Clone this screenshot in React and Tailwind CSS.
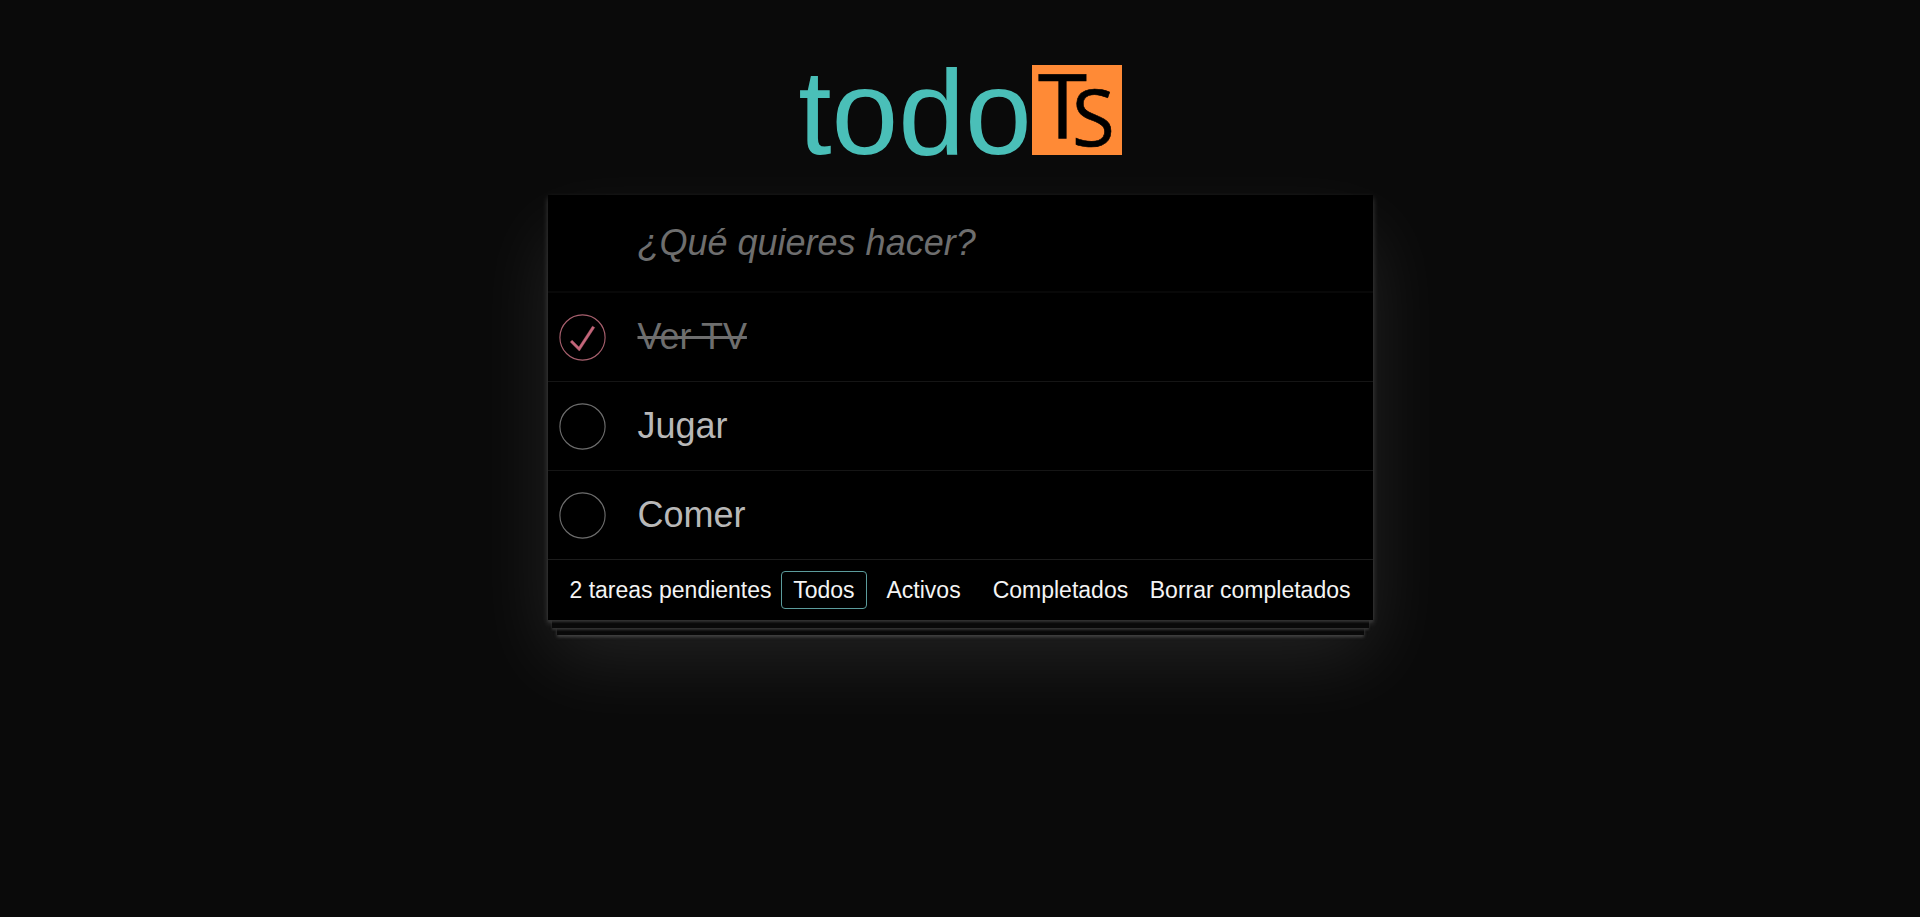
import { useState } from 'react'

const initialTodos = [
  { id: 1, title: 'Ver TV', completed: true },
  { id: 2, title: 'Jugar', completed: false },
  { id: 3, title: 'Comer', completed: false },
]

const filters = [
  { id: 'all', label: 'Todos', test: () => true },
  { id: 'active', label: 'Activos', test: (todo) => !todo.completed },
  { id: 'completed', label: 'Completados', test: (todo) => todo.completed },
]

function Logo() {
  return (
    <svg viewBox="0 0 90 90" className="size-[90px] overflow-visible" role="img" aria-label="TypeScript">
      <rect width="90" height="90" fill="#ff8a36" />
      <g fill="#000" stroke="#000" strokeWidth="0.6" fontFamily="'Open Sans', sans-serif">
        <text x="6" y="74" fontSize="89">T</text>
        <text x="40" y="81" fontSize="78">S</text>
      </g>
    </svg>
  )
}

function CheckCircle({ checked }) {
  return (
    <svg viewBox="-2 -2 104 104" className="size-[47px]" fill="none" aria-hidden="true">
      <circle cx="50" cy="50" r="50" stroke={checked ? '#a8606e' : '#6e6e6e'} strokeWidth="2.5" />
      {checked && (
        <path d="M72 25L42 71 27 56l-4 4 20 20 34-52z" fill="#c4667a" stroke="#c4667a" strokeWidth="1" />
      )}
    </svg>
  )
}

function Todo({ todo, onToggle }) {
  const id = `todo-${todo.id}`
  return (
    <li className="flex h-[89px] items-center border-b border-[#151515] pl-[11px] last:h-[88px] last:border-b-0">
      <label htmlFor={id} className="flex flex-1 cursor-pointer items-center gap-8">
        <input
          id={id}
          type="checkbox"
          className="peer sr-only"
          checked={todo.completed}
          onChange={() => onToggle(todo.id)}
        />
        <CheckCircle checked={todo.completed} />
        <span className={todo.completed ? 'text-[#6e6e6e] line-through' : 'text-[#b8b8b8]'}>
          {todo.title}
        </span>
      </label>
    </li>
  )
}

export default function App() {
  const [todos, setTodos] = useState(initialTodos)
  const [filter, setFilter] = useState('all')
  const [draft, setDraft] = useState('')

  const current = filters.find((f) => f.id === filter)
  const pending = todos.filter((todo) => !todo.completed).length

  const toggle = (id) =>
    setTodos(todos.map((todo) => (todo.id === id ? { ...todo, completed: !todo.completed } : todo)))

  const addTodo = (event) => {
    event.preventDefault()
    if (!draft.trim()) return
    setTodos([...todos, { id: Date.now(), title: draft.trim(), completed: false }])
    setDraft('')
  }

  return (
    <div className="min-h-screen bg-[#0a0a0a] px-4 pt-[65px] font-['Liberation_Sans',Arial,sans-serif] antialiased">
      <main className="mx-auto max-w-[825px]">
        <h1 className="flex h-[90px] items-start justify-center text-[120px] leading-[94px] text-[#4abfb8]">
          <span>todo</span>
          <Logo />
        </h1>

        <section className="mt-10 bg-black text-4xl shadow-[0_3px_6px_0_rgb(255_255_255/0.2),0_38px_75px_0_rgb(255_255_255/0.1)]">
          <form onSubmit={addTodo}>
            <input
              aria-label="Nueva tarea"
              className="block h-[98px] w-full border-b-2 border-[#080808] bg-black pr-6 pl-[90px] text-[#b8b8b8] outline-none placeholder:text-[#6e6e6e] placeholder:italic"
              placeholder="¿Qué quieres hacer?"
              value={draft}
              onChange={(event) => setDraft(event.target.value)}
            />
          </form>

          <ul>
            {todos.filter(current.test).map((todo) => (
              <Todo key={todo.id} todo={todo} onToggle={toggle} />
            ))}
          </ul>

          <footer className="flex min-h-[61px] flex-wrap items-center justify-between border-t border-[#1c1c1c] px-[22px] text-[23px] leading-7 text-[#f4f4f4] shadow-[0_2px_2px_#333,0_12px_0_-4px_#090909,0_14px_2px_-4px_#333,0_24px_0_-9px_#090909,0_26px_3px_-9px_#444]">
            <span>{pending} tareas pendientes</span>
            <ul className="flex gap-2">
              {filters.map((f) => (
                <li key={f.id}>
                  <a
                    href={`#/${f.id}`}
                    onClick={() => setFilter(f.id)}
                    className={`block rounded-[4px] border px-[11px] py-1 ${
                      f.id === filter ? 'border-[#5c9c9c]' : 'border-transparent'
                    }`}
                  >
                    {f.label}
                  </a>
                </li>
              ))}
            </ul>
            <button
              type="button"
              className="cursor-pointer"
              onClick={() => setTodos(todos.filter((todo) => !todo.completed))}
            >
              Borrar completados
            </button>
          </footer>
        </section>
      </main>
    </div>
  )
}
